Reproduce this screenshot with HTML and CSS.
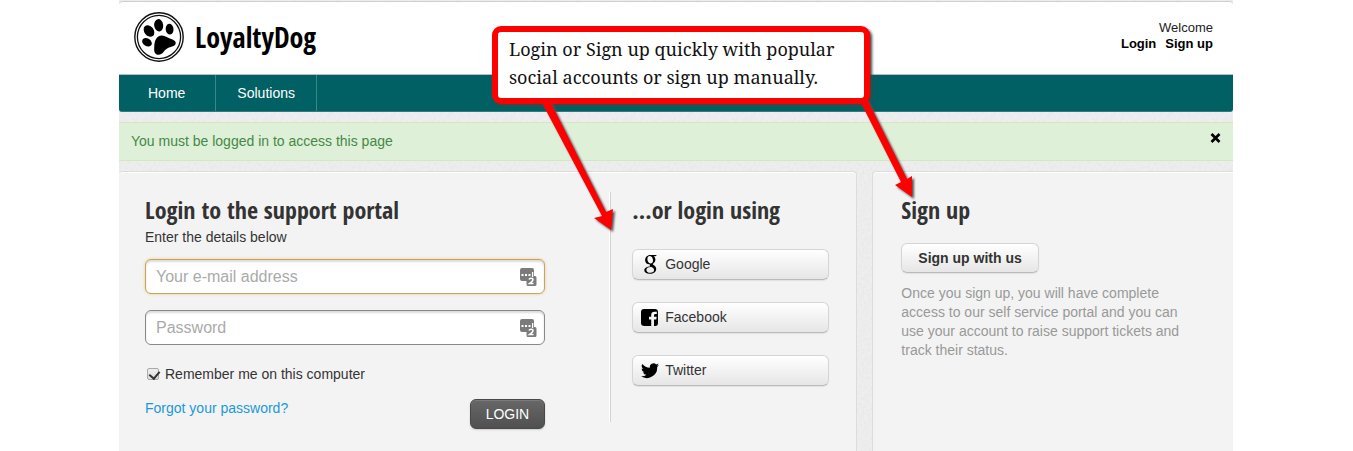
FILE: index.html
```html
<!DOCTYPE html>
<html lang="en">
<head>
<meta charset="utf-8">
<title>LoyaltyDog support</title>
<link rel="stylesheet" href="styles.css">
</head>
<body>
<div class="page">
  <header class="header">
    <a class="brand" href="#">
      <svg class="brand-logo" viewBox="0 0 50 50" aria-hidden="true">
        <circle cx="25" cy="25" r="24.2" fill="#fff" stroke="#111" stroke-width="1.4"/>
        <circle cx="25" cy="25" r="21.6" fill="none" stroke="#111" stroke-width="1.3"/>
        <ellipse cx="15" cy="19" rx="4.700" ry="6.300" transform="rotate(-38 15 19)"/>
        <ellipse cx="24.700" cy="13.300" rx="4.500" ry="6.200" transform="rotate(-8 24.700 13.300)"/>
        <ellipse cx="35.600" cy="17.200" rx="3.900" ry="5.400" transform="rotate(-6 35.600 17.200)"/>
        <ellipse cx="13" cy="30.300" rx="3.800" ry="5.200" transform="rotate(-58 13 30.300)"/>
        <path d="M20.300 34C20.500 27 24 23.200 28 23.500c3.500.3 4.800 2 8.500 3.200 4 1.300 6 3 5 5.500-1 2.200-4 2.300-6.500 3.300-3 1.200-3.800 2.500-5.500 4.500-2 2.500-5 3.500-7.200 2.200C19.700 40.700 20.200 37.500 20.300 34z"/>
      </svg>
      <span class="brand-name">LoyaltyDog</span>
    </a>
    <div class="account">
      <span>Welcome</span>
      <div class="account-links"><a href="#">Login</a><a href="#">Sign up</a></div>
    </div>
  </header>
  <nav class="nav">
    <a href="#">Home</a>
    <a href="#">Solutions</a>
  </nav>
  <div class="alert" role="alert">
    <span>You must be logged in to access this page</span>
    <button class="alert-close" type="button" aria-label="Close">
      <svg viewBox="0 0 10 10" aria-hidden="true"><path d="M1 1l8 8M9 1l-8 8" stroke="#000" stroke-width="2.700"/></svg>
    </button>
  </div>
  <main class="content">
    <section class="panel login-panel">
      <form class="login">
        <h2>Login to the support portal</h2>
        <p class="hint">Enter the details below</p>
        <div class="field field-active">
          <input type="email" placeholder="Your e-mail address" aria-label="Your e-mail address">
          <svg class="field-icon" viewBox="0 0 17 18" aria-hidden="true">
            <path fill="#7b7b7b" d="M2 0h10q2 0 2 2v6h1q1.500 0 1.500 1.500v7q0 1.500-1.500 1.500H8q-1.500 0-1.500-1.500V13H2q-2 0-2-2V2q0-2 2-2z"/>
            <path fill="#fff" d="M1.500 6h2v2h-2zM5 6h2v2H5zM8.500 6h2v2h-2zM12 4h1.200v5H12z"/>
            <path fill="none" stroke="#fff" stroke-width="1.500" d="M9 11.500q.5-1.200 2-1.200 2 0 2 1.500 0 1-2 2.500L9.500 15.500H13.500"/>
          </svg>
        </div>
        <div class="field">
          <input type="password" placeholder="Password" aria-label="Password">
          <svg class="field-icon" viewBox="0 0 17 18" aria-hidden="true">
            <path fill="#7b7b7b" d="M2 0h10q2 0 2 2v6h1q1.500 0 1.500 1.500v7q0 1.500-1.500 1.500H8q-1.500 0-1.500-1.500V13H2q-2 0-2-2V2q0-2 2-2z"/>
            <path fill="#fff" d="M1.500 6h2v2h-2zM5 6h2v2H5zM8.500 6h2v2h-2zM12 4h1.200v5H12z"/>
            <path fill="none" stroke="#fff" stroke-width="1.500" d="M9 11.500q.5-1.200 2-1.200 2 0 2 1.500 0 1-2 2.500L9.500 15.500H13.500"/>
          </svg>
        </div>
        <label class="remember"><input type="checkbox" checked>Remember me on this computer</label>
        <div class="actions">
          <a href="#">Forgot your password?</a>
          <button class="login-button" type="submit">LOGIN</button>
        </div>
      </form>
      <div class="social">
        <h2>...or login using</h2>
        <div class="social-list">
          <button class="button social-button" type="button">
            <svg viewBox="0 0 18 20" aria-hidden="true"><path fill-rule="evenodd" d="M9.300 1H16l-1.700 1.300h-1.600c1.200.9 1.700 2.100 1.700 3.500 0 1.500-.7 2.500-1.900 3.400-.8.700-.8 1.200.2 1.900 1.700 1.200 2.500 2.200 2.500 3.900 0 2.700-2.500 4.800-6.500 4.800-3.400 0-5.400-1.400-5.400-3.500 0-2.400 2.500-3.800 6-3.900-.6-.7-.8-1.300-.5-2.100C6 10.600 4.100 8.600 4.100 6.200 4.100 3.300 6.200 1 9.300 1zM8.900 1.900c-1.600 0-2.500 1.200-2.500 3 0 2.300 1.200 4.500 3.200 4.500 1.500 0 2.400-1.100 2.400-2.900 0-2.200-1.100-4.600-3.100-4.600zM9.900 13c-2.900 0-4.500 1-4.500 2.900 0 1.700 1.500 2.900 4 2.900 2.300 0 3.700-1 3.700-2.700 0-1.200-.8-1.900-2.500-3.100z"/></svg>
            Google
          </button>
          <button class="button social-button" type="button">
            <svg viewBox="0 0 18 20" aria-hidden="true"><path fill-rule="evenodd" d="M4 2h10q3 0 3 3v11q0 3-2.500 3H13v-6.500h2.300l.4-2.700H13V8.300q0-1.300 1.500-1.300h1.300V4.700h-2.300q-3.300 0-3.300 3.200v1.900H8v2.700h2.200V19H3.500Q0 19 0 16V5q0-3 3-3z"/></svg>
            Facebook
          </button>
          <button class="button social-button" type="button">
            <svg viewBox="0 0 18 20" aria-hidden="true"><path d="M18 5a7 7 0 0 1-2.100.6A3.700 3.700 0 0 0 17.500 3.500a7.400 7.400 0 0 1-2.300.9A3.700 3.700 0 0 0 8.900 7.800 10.500 10.500 0 0 1 1.300 3.900a3.700 3.700 0 0 0 1.100 5A3.700 3.700 0 0 1 .7 8.400a3.700 3.700 0 0 0 3 3.700 3.700 3.700 0 0 1-1.700.1 3.700 3.700 0 0 0 3.500 2.500A7.400 7.400 0 0 1 0 16.300a10.500 10.500 0 0 0 16.200-9.400A7.500 7.500 0 0 0 18 5z"/></svg>
            Twitter
          </button>
        </div>
      </div>
    </section>
    <section class="panel signup">
      <h2>Sign up</h2>
      <button class="button signup-button" type="button">Sign up with us</button>
      <p>Once you sign up, you will have complete access to our self service portal and you can use your account to raise support tickets and track their status.</p>
    </section>
  </main>
  <div class="callout">Login or Sign up quickly with popular social accounts or sign up manually.</div>
  <svg class="arrows" viewBox="0 0 400 150" aria-hidden="true">
    <path d="M49 10L110 125L102 127L119 139L121 118L114 121L58 10z"/>
    <path d="M367 8L409 91L403 94L420 106L420 85L415 88L375 8z"/>
  </svg>
</div>
</body>
</html>
```
FILE: styles.css
```css
* { box-sizing: border-box; }

body {
  margin: 0;
  padding: 0 120px 0 119px;
  background: #fff;
  color: #333;
  font: 14px/20px "Liberation Sans", Arial, sans-serif;
}

h2, p { margin: 0; }
a { color: inherit; text-decoration: none; }
button, input { font: inherit; }

h2, .brand-name {
  font-family: "Open Sans Condensed", "Liberation Sans Narrow", "Liberation Sans", sans-serif;
  font-weight: 700;
}

h2 { font-size: 24px; line-height: 30px; }

.page {
  position: relative;
  display: flex;
  flex-direction: column;
  min-height: 100vh;
  padding-top: 1px;
  background: #eee url("data:image/svg+xml,%3Csvg xmlns='http://www.w3.org/2000/svg' width='120' height='120'%3E%3Cfilter id='n'%3E%3CfeTurbulence type='fractalNoise' baseFrequency='.35' numOctaves='2' stitchTiles='stitch'/%3E%3CfeColorMatrix values='0 0 0 0 .5 0 0 0 0 .5 0 0 0 0 .5 .25 0 0 0 -.09'/%3E%3C/filter%3E%3Crect width='120' height='120' filter='url(%23n)'/%3E%3C/svg%3E");
}

.header {
  display: flex;
  justify-content: space-between;
  align-items: flex-start;
  padding: 10px 20px 12px 15px;
  background: #fff;
  border-top: 1px solid #cfcfcf;
  border-bottom: 1px solid #bbb;
  border-radius: 4px 4px 0 0;
}

.brand { display: flex; align-items: center; gap: 11px; color: #000; }
.brand-logo { width: 50px; height: 50px; }
.brand-name { font-size: 28px; line-height: 36px; }

.account { padding-top: 8px; font-size: 13px; line-height: 16px; text-align: right; color: #222; }
.account-links { display: flex; justify-content: flex-end; gap: 9px; font-weight: 700; color: #000; }

.nav {
  display: flex;
  background: #006063;
  border-bottom: 1px solid #2f7c7e;
  border-radius: 0 0 3px 3px;
  color: #fff;
}
.nav a { padding: 8px 21px; border-right: 1px solid #3d8688; }
.nav a:first-child { padding: 8px 30px 8px 29px; }

.alert {
  display: flex;
  justify-content: space-between;
  align-items: flex-start;
  margin: 10px 0;
  padding: 8px 12px 9px;
  background: #dff0d8;
  border: solid #d0e9c0;
  border-width: 1px 0;
  color: #468847;
}
.alert-close { display: flex; padding: 2px 0; border: 0; background: none; }
.alert-close svg { width: 11px; height: 10px; }

.content {
  flex: 1;
  display: grid;
  grid-template-columns: 739fr 361fr;
  gap: 15px;
}

.panel {
  padding: 23px 28px 21px;
  background: #f3f3f3;
  border: 1px solid #dcdcdc;
  border-bottom: 0;
  border-radius: 4px 0 0 0;
  box-shadow: inset 0 1px #fff;
}

.login-panel {
  display: grid;
  grid-template-columns: 465fr 219fr;
  padding: 20px 27px 21px 26px;
  border-left: 0;
  border-radius: 4px 4px 0 0;
}
.signup { border-right: 0; }

.login { padding: 3px 65px 0 0; }
.hint { padding: 2px 0 12px; }

.field { position: relative; margin-bottom: 16px; }
.field input {
  display: block;
  width: 100%;
  height: 35px;
  padding: 0 36px 0 10px;
  border: 1px solid #888;
  border-radius: 6px;
  background: #fff;
  box-shadow: inset 0 2px 2px #ddd;
  font-size: 16px;
}
.field input::placeholder { color: #aaa; opacity: 1; }
.field-active input { border-color: #c9a45c; box-shadow: inset 0 2px 2px #ddd, 0 0 3px #ecc98a; }
.field-icon { position: absolute; top: 9px; right: 8px; width: 17px; height: 18px; }

.remember { display: flex; align-items: center; gap: 6px; padding: 3px 0 0 2px; }
.remember input {
  position: relative;
  appearance: none;
  width: 12px;
  height: 12px;
  margin: 0;
  border: 1px solid #aaa;
  border-radius: 2px;
  background: linear-gradient(#eee, #ddd);
}
.remember input:checked::after {
  content: "";
  position: absolute;
  left: 3px;
  top: 0;
  width: 5px;
  height: 8px;
  border: solid #333;
  border-width: 0 2px 2px 0;
  transform: rotate(40deg);
}

.actions { display: flex; justify-content: space-between; align-items: flex-start; padding-top: 14px; color: #1a9ad7; }
.login-button {
  height: 30px;
  margin-top: 1px;
  padding: 0 15px;
  border: 1px solid #484848;
  border-radius: 6px;
  background: linear-gradient(#676767, #505050);
  box-shadow: inset 0 1px #7b7b7b, 0 1px 2px #ccc;
  color: #fff;
}

.social {
  align-self: start;
  min-height: 230px;
  padding: 3px 0 0 21px;
  border-left: 1px solid #d2d2d2;
  box-shadow: -1px 0 #fff;
}
.social-list { display: grid; gap: 22px; padding-top: 24px; }

.button {
  border: 1px solid #d5d5d5;
  border-bottom-color: #bbb;
  border-radius: 6px;
  background: linear-gradient(#fff, #e6e6e6);
  box-shadow: 0 1px 1px #e2e2e2;
  color: #333;
}
.social-button { display: flex; align-items: center; gap: 6px; height: 31px; padding: 0 8px 1px; }
.social-button svg { width: 18px; height: 20px; }

.signup-button { height: 30px; margin: 18px 0 11px; padding: 0 16px; font-weight: 700; }
.signup p { max-width: 290px; line-height: 19px; color: #999; }

.callout {
  position: absolute;
  top: 26px;
  left: 373px;
  width: 378px;
  padding: 3px 11px 7px;
  border: 6px solid #f00;
  border-radius: 9px;
  background: #fff;
  box-shadow: 2px 2px 3px #444;
  color: #111;
  font: 18px/28px "Noto Serif", "Droid Serif", "Liberation Serif", serif;
}

.arrows {
  position: absolute;
  top: 91px;
  left: 373px;
  width: 400px;
  height: 150px;
  overflow: visible;
  fill: #f00;
  filter: drop-shadow(2px 2px 1px #555);
}
```
